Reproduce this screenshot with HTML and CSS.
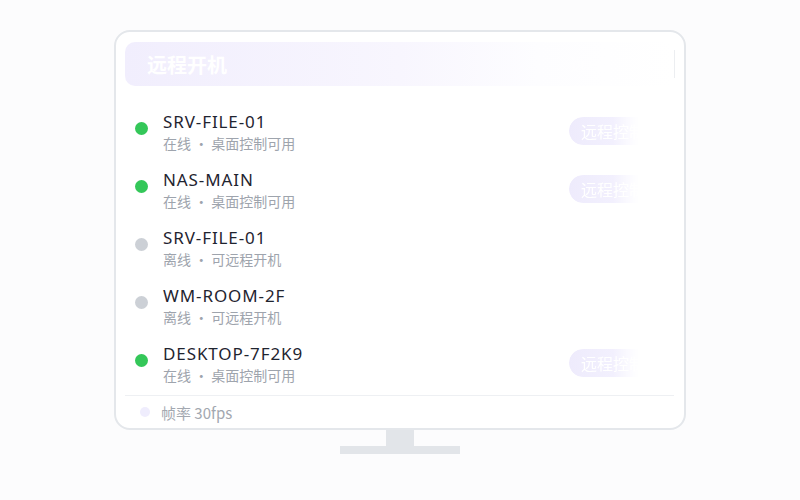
FILE: index.html
```
<!DOCTYPE html>
<html lang="zh">
<head>
<meta charset="utf-8">
<link rel="stylesheet" href="styles.css">
</head>
<body>
<div class="monitor">
  <div class="screen">
    <div class="header">
      <span class="title">远程开机</span>
      <span class="header-action">远程开机</span>
    </div>
    <ul class="list">
      <li class="row">
        <span class="dot on"></span>
        <div class="info"><div class="name">SRV-FILE-01</div><div class="sub">在线 · 桌面控制可用</div></div>
        <span class="btn">远程控制</span>
      </li>
      <li class="row">
        <span class="dot on"></span>
        <div class="info"><div class="name">NAS-MAIN</div><div class="sub">在线 · 桌面控制可用</div></div>
        <span class="btn">远程控制</span>
      </li>
      <li class="row">
        <span class="dot off"></span>
        <div class="info"><div class="name">SRV-FILE-01</div><div class="sub">离线 · 可远程开机</div></div>
      </li>
      <li class="row">
        <span class="dot off"></span>
        <div class="info"><div class="name">WM-ROOM-2F</div><div class="sub">离线 · 可远程开机</div></div>
      </li>
      <li class="row">
        <span class="dot on"></span>
        <div class="info"><div class="name">DESKTOP-7F2K9</div><div class="sub">在线 · 桌面控制可用</div></div>
        <span class="btn">远程控制</span>
      </li>
    </ul>
    <div class="footer">
      <span class="fdot"></span>
      <span class="ftext">帧率 30fps</span>
    </div>
  </div>
  <div class="neck"></div>
  <div class="base"></div>
</div>
</body>
</html>
```
FILE: styles.css
```
html, body {
  margin: 0;
  padding: 0;
}
body {
  background: #fcfcfd;
  font-family: "Noto Sans", "Noto Sans CJK SC", sans-serif;
  width: 800px;
  height: 500px;
  overflow: hidden;
}
.monitor {
  display: flex;
  flex-direction: column;
  align-items: center;
  padding-top: 30px;
}
.screen {
  box-sizing: border-box;
  width: 572px;
  height: 400px;
  border: 2px solid #e4e7eb;
  border-radius: 16px;
  background: #fff;
  padding: 10px 9px 0 9px;
  display: flex;
  flex-direction: column;
}
.header {
  height: 44px;
  border-radius: 10px;
  background: linear-gradient(90deg, #f1eefd 0%, #f8f6fe 50%, #fdfdff 75%, #ffffff 100%);
  display: flex;
  align-items: center;
  justify-content: space-between;
  padding: 0 0 0 22px;
}
.title {
  font-size: 20px;
  font-weight: 700;
  color: #ffffff;
  font-family: "Noto Sans CJK SC", sans-serif;
}
.header-action {
  font-size: 17px;
  color: rgba(255,255,255,0.9);
  border-right: 1px solid #eceef1;
  padding: 0 0 0 6px;
  width: 104px;
  line-height: 28px;
  font-family: "Noto Sans CJK SC", sans-serif;
}
.list {
  list-style: none;
  margin: 0;
  padding: 17px 0 0 0;
  flex: 1;
}
.row {
  display: flex;
  align-items: flex-start;
  padding: 8px 0 8px 10px;
  height: 42px;
}
.dot {
  width: 13px;
  height: 13px;
  border-radius: 50%;
  flex: none;
  margin-top: 11px;
}
.dot.on { background: #34c759; }
.dot.off { background: #ccd0d6; }
.info {
  margin-left: 15px;
  flex: 1;
}
.name {
  font-size: 17px;
  line-height: 22px;
  color: #1f2430;
  letter-spacing: 0.9px;
}
.sub {
  font-size: 14px;
  line-height: 20px;
  color: #9ea4ad;
  font-family: "Noto Sans CJK SC", sans-serif;
}
.btn {
  height: 28px;
  border-radius: 14px;
  background: linear-gradient(90deg, #eeebfc 0%, #f3f1fe 60%, #fbfaff 100%);
  color: #ffffff;
  font-size: 16px;
  line-height: 28px;
  padding: 0 12px;
  white-space: nowrap;
  margin-right: 18px;
  margin-top: 6px;
  font-family: "Noto Sans CJK SC", sans-serif;
  -webkit-mask-image: linear-gradient(90deg, #000 0%, #000 50%, rgba(0,0,0,0) 80%);
  mask-image: linear-gradient(90deg, #000 0%, #000 50%, rgba(0,0,0,0) 80%);
}
.footer {
  border-top: 1px solid #eef0f3;
  height: 32px;
  display: flex;
  align-items: center;
  padding-left: 15px;
  margin-right: 1px;
}
.fdot {
  width: 10px;
  height: 10px;
  border-radius: 50%;
  background: #efedfd;
}
.ftext {
  margin-left: 11px;
  font-size: 15px;
  color: #a3a8b0;
  font-family: "Noto Sans CJK SC", sans-serif;
}
.neck {
  width: 28px;
  height: 16px;
  background: #e2e5e9;
}
.base {
  width: 120px;
  height: 8px;
  background: #e2e5e9;
}
```
